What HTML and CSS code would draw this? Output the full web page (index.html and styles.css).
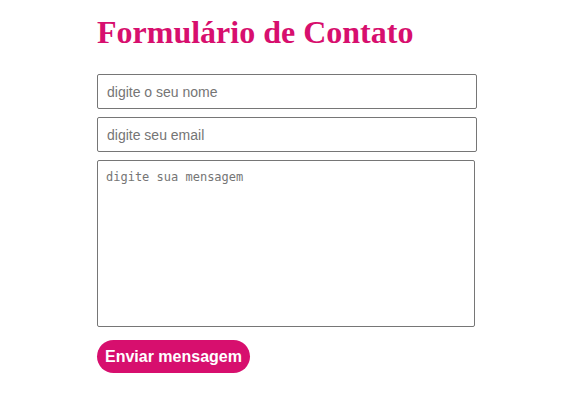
FILE: index.html
```html
<!DOCTYPE html>
<html lang="pt">
<head>
<meta charset="utf-8">
<title>Formulário de Contato</title>
<link rel="stylesheet" href="styles.css">
</head>
<body>
<main class="container">
  <h1 class="title">Formulário de Contato</h1>
  <form class="form">
    <input class="field" type="text" placeholder="digite o seu nome">
    <input class="field" type="email" placeholder="digite seu email">
    <textarea class="message" placeholder="digite sua mensagem"></textarea>
    <button class="submit" type="button">Enviar mensagem</button>
  </form>
</main>
</body>
</html>
```

FILE: styles.css
```css
html, body {
  margin: 0;
  padding: 0;
  background: #ffffff;
}

.container {
  width: 380px;
  margin-left: 97px;
  padding-top: 14px;
}

.title {
  margin: 0 0 23px 0;
  font-family: "Liberation Serif", "Times New Roman", serif;
  font-size: 32px;
  font-weight: bold;
  line-height: 37px;
  color: #d70f6e;
}

.form {
  display: flex;
  flex-direction: column;
  align-items: flex-start;
  gap: 8px;
}

.field {
  box-sizing: border-box;
  width: 380px;
  height: 35px;
  margin: 0;
  padding: 0 9px;
  border: 1px solid #767676;
  border-radius: 2px;
  font-family: "Liberation Sans", Arial, sans-serif;
  font-size: 14px;
  color: #222;
}

.field::placeholder {
  color: #757575;
}

.message {
  box-sizing: border-box;
  width: 378px;
  height: 167px;
  margin: 0 0 5px 0;
  padding: 9px 8px;
  border: 1px solid #767676;
  border-radius: 2px;
  font-family: "DejaVu Sans Mono", "Liberation Mono", monospace;
  font-size: 12px;
  resize: none;
  color: #222;
}

.message::placeholder {
  color: #757575;
}

.submit {
  height: 33px;
  padding: 0 8px;
  border: none;
  border-radius: 17px;
  background: #d70f6e;
  color: #ffffff;
  font-family: "Liberation Sans", Arial, sans-serif;
  font-size: 16px;
  font-weight: bold;
  cursor: pointer;
}
```
